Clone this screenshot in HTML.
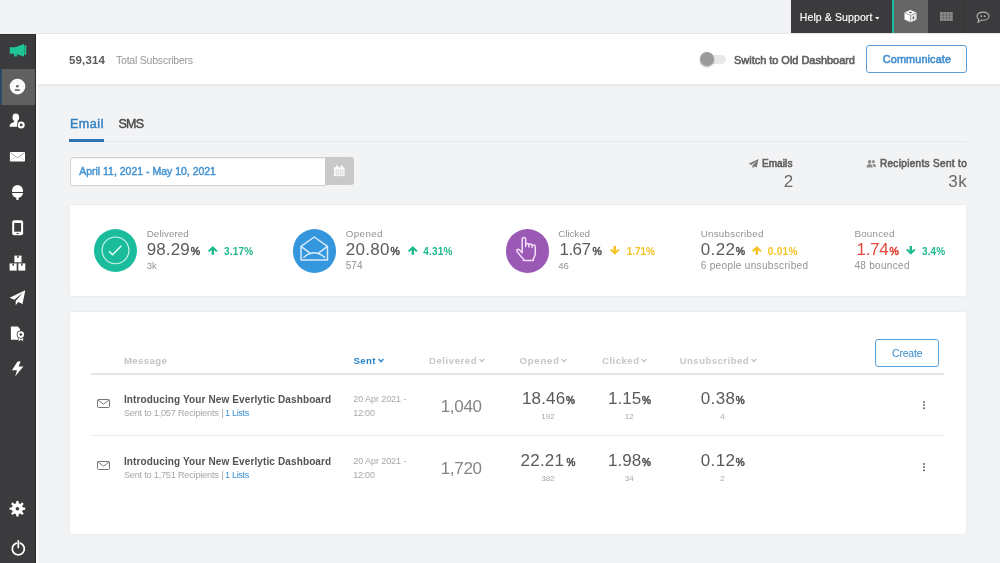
<!DOCTYPE html>
<html lang="en"><head><meta charset="utf-8"><title>Dashboard</title>
<style>
*{box-sizing:border-box;margin:0;padding:0}
html,body{width:1000px;height:563px;overflow:hidden;background:#f2f3f5;font-family:"Liberation Sans", sans-serif;}
.tx{position:absolute;white-space:nowrap;line-height:1;}
#app{position:absolute;left:0;top:0;width:1000px;height:563px;will-change:transform;}
.ic{position:absolute;display:block;overflow:visible}
.bx{position:absolute}
a{text-decoration:none;color:inherit}
.topbar{left:791px;top:0;width:209px;height:33px;background:#3b3b3d}
.side{left:0;top:34px;width:36.200px;height:529px;background:#3b3b3d;border-right:1px solid #2a2a2b;border-top:1px solid #303031}
.side-act{left:0;top:69px;width:35.300px;height:35.500px;background:#606060;border-left:2px solid #2c4a66}
.hdr{left:36px;top:33px;width:964px;height:52.800px;background:#fff;border-top:1px solid #e6e7e9;border-bottom:2px solid #eaebed}
.strip{left:36px;top:84px;width:2.400px;height:479px;background:#fbfbfc}
.card{background:#fff;border-radius:3px;border:1px solid #ebecee}
.btn{border:1px solid #5aa3da;border-radius:3px;background:#fff}
.circ{border-radius:50%}
</style></head>
<body>
<div id="app">
<div class="bx topbar"></div>
<div class="bx" style="left:892px;top:0;width:2px;height:33px;background:#1abc9c"></div>
<div class="bx" style="left:894px;top:0;width:34px;height:33px;background:#666"></div>
<div class="bx" style="left:963px;top:0;width:1px;height:33px;background:#333"></div>
<nav class="topnav">
<span class="tx" id="help" style="left:799.80px;top:12.00px;font-size:10.5px;color:#fff;-webkit-text-stroke:0.15px;letter-spacing:0.106px;">Help &amp; Support</span>
<svg class="ic" style="left:875px;top:16.800px" width="4.600" height="2.600" viewBox="0 0 5 3"><path d="M0 0h5L2.500 3z" fill="#fff"/></svg>
<svg class="ic" style="left:903px;top:9px" width="15" height="14" viewBox="903 9 15 14"><g transform="translate(910.400 16) scale(.94) translate(-910.400 -15.800)"><path d="M910.400 9.500l6.300 2.700v7.400l-6.300 2.900-6.300-2.900v-7.400z" fill="#fff"/><path d="M910.400 15.100l6.300-2.900v7.400l-6.300 2.900z" fill="#e2e2e2"/><path d="M904.300 12.300l6.100 2.800 6.100-2.800M910.400 15.100v7.200" fill="none" stroke="#7a7a7a" stroke-width=".7"/><ellipse cx="910.400" cy="12.200" rx="1.500" ry=".8" fill="#555"/><ellipse cx="913.600" cy="17.600" rx=".8" ry="1.300" fill="#555"/></g></svg>
<svg class="ic" style="left:940px;top:12px" width="13" height="9" viewBox="940 12 13 9"><rect x="940" y="12.100" width="12.700" height="8.800" fill="#8e8e8e"/><path d="M943.200 12v9M946.350 12v9M949.500 12v9M940 15h12.700M940 18h12.700" stroke="#5a5a5a" stroke-width=".6"/></svg>
<svg class="ic" style="left:976px;top:10px" width="14" height="14" viewBox="976 10 14 14"><g transform="translate(0 .5)"><path d="M983 11.600c3.400 0 6 1.800 6 4.100s-2.600 4.100-6 4.100c-.7 0-1.300-.1-1.900-.2l-3.200 2.300.9-3.200c-1.200-.800-1.800-1.800-1.800-3 0-2.300 2.600-4.100 6-4.100z" fill="none" stroke="#b4b4b4" stroke-width="1.100" stroke-linejoin="round"/><g fill="#b4b4b4"><circle cx="981.300" cy="15.700" r=".9"/><circle cx="984.700" cy="15.700" r=".9"/></g></g></svg>
</nav>

<nav>
<div class="bx side"></div>
<div class="bx side-act"></div>
<a class="si"><svg class="ic" style="left:9px;top:43px" width="18" height="14" viewBox="9 43 18 14"><g fill="#1fc597"><path d="M9.8 47.2h5.200L24 44v12.400L15 53.800H9.800z"/><rect x="24.300" y="45.300" width="1.900" height="9.600" rx=".9"/><path d="M13.600 54h3l.7 2.400h-2.800z"/></g></svg></a>
<a class="si"><svg class="ic" style="left:9px;top:78px" width="17" height="17" viewBox="9 78 17 17"><circle cx="17.500" cy="86.600" r="7.800" fill="#fff"/><g stroke="#c9c9c9" stroke-width=".7"><path d="M17.500 80.300v1.500M13 82.200l1 1M22 82.200l-1 1M11.300 86.400h1.400M23.700 86.400h-1.400"/></g><path d="M17.400 86.300l2.600-3.300" stroke="#ddd" stroke-width=".8"/><circle cx="17.400" cy="86.300" r="1.250" fill="#555"/><rect x="14.800" y="89.200" width="5" height="1.600" rx=".3" fill="#555"/></svg></a>
<a class="si"><svg class="ic" style="left:9px;top:113px" width="17" height="16" viewBox="9 113 17 16"><g fill="#fff"><ellipse cx="15.800" cy="117.400" rx="3.300" ry="3.800"/><path d="M9.600 126.800c0-2.700 1.300-3.700 4-4.500l.9-1.200h2.600l.9 1.200c1.600.5 2.800 1 3.400 2l-1.400 2.500z"/></g><circle cx="21.200" cy="124.900" r="4.300" fill="#3b3b3d"/><circle cx="21.200" cy="124.900" r="3.500" fill="#fff"/><circle cx="21.200" cy="124.900" r="1.350" fill="#3b3b3d"/></svg></a>
<a class="si"><svg class="ic" style="left:9px;top:151px" width="17" height="12" viewBox="9 151 17 12"><rect x="9.900" y="151.900" width="15.100" height="9.600" rx=".8" fill="#fff"/><path d="M10.800 152.900l6.700 5 6.700-5" fill="none" stroke="#9a9a9a" stroke-width=".9"/><path d="M10.800 160.600l4.300-3.600M24.200 160.600l-4.300-3.600" fill="none" stroke="#c4c4c4" stroke-width=".7"/></svg></a>
<a class="si"><svg class="ic" style="left:11px;top:184px" width="13" height="17" viewBox="11 184 13 17"><g fill="#fff"><path d="M12.100 191.900v-1.600a5.400 5.400 0 0 1 10.800 0v1.600z"/><path d="M12.100 192.900h10.800v.4a5.400 4.700 0 0 1-10.800 0z"/><rect x="16.400" y="197" width="2.100" height="3"/></g></svg></a>
<a class="si"><svg class="ic" style="left:12px;top:220px" width="12" height="16" viewBox="12 220 12 16"><rect x="12.200" y="220.300" width="10.900" height="15" rx="2" fill="#fff"/><rect x="14.200" y="223" width="6.900" height="8.700" fill="#3b3b3d"/><ellipse cx="17.650" cy="233.500" rx="1.300" ry=".6" fill="#3b3b3d"/></svg></a>
<a class="si"><svg class="ic" style="left:9px;top:255px" width="17" height="16" viewBox="9 255 17 16"><g fill="#fff"><rect x="14.400" y="255.600" width="7.100" height="6.700"/><rect x="9.600" y="263.400" width="7.100" height="7.200"/><rect x="18.300" y="263.400" width="7" height="7.200"/></g><g fill="#3b3b3d"><rect x="17.200" y="255.600" width="1.500" height="2.300"/><rect x="12.400" y="263.400" width="1.500" height="2.300"/><rect x="21.100" y="263.400" width="1.500" height="2.300"/></g></svg></a>
<a class="si"><svg class="ic" style="left:9px;top:290px" width="17" height="16" viewBox="9 290 17 16"><path d="M25.300 290.300L9.600 297.700l4.700 2.100 8.700-7.200-7.300 8.400v4.300l2.500-3.200 4.300 1.800z" fill="#fff"/></svg></a>
<a class="si"><svg class="ic" style="left:10px;top:326px" width="15" height="16" viewBox="10 326 15 16"><path d="M10.900 326.600h6.800l2.400 2.400v10.700h-9.200z" fill="#fff"/><path d="M18.400 337.200h4.800v4.200l-2.400-1.300-2.400 1.300z" fill="#fff" stroke="#3b3b3d" stroke-width=".5"/><circle cx="20.800" cy="334.600" r="4.100" fill="#3b3b3d"/><circle cx="20.800" cy="334.600" r="3.300" fill="#fff"/><circle cx="20.800" cy="334.600" r="1.250" fill="#3b3b3d"/></svg></a>
<a class="si"><svg class="ic" style="left:11px;top:361px" width="13" height="16" viewBox="11 361 13 16"><path d="M17.500 361.600h3.200l-2.200 5h4.900l-8.200 9.600 1.800-6h-5.100z" fill="#fff"/></svg></a>
<a class="si"><svg class="ic" style="left:9px;top:500px" width="17" height="17" viewBox="9 500 17 17"><path d="M16.20 503.23 L16.23 500.89 L18.57 500.89 L18.60 503.23 L20.42 503.98 L22.09 502.35 L23.75 504.01 L22.12 505.68 L22.87 507.50 L25.21 507.53 L25.21 509.87 L22.87 509.90 L22.12 511.72 L23.75 513.39 L22.09 515.05 L20.42 513.42 L18.60 514.17 L18.57 516.51 L16.23 516.51 L16.20 514.17 L14.38 513.42 L12.71 515.05 L11.05 513.39 L12.68 511.72 L11.93 509.90 L9.59 509.87 L9.59 507.53 L11.93 507.50 L12.68 505.68 L11.05 504.01 L12.71 502.35 L14.38 503.98Z" fill="#fff"/><circle cx="17.400" cy="508.700" r="1.800" fill="#3b3b3d"/></svg></a>
<a class="si"><svg class="ic" style="left:11px;top:539px" width="15" height="17" viewBox="11 539 15 17"><path d="M16.300 543.200a6 6 0 1 0 4 0" fill="none" stroke="#fff" stroke-width="1.800" stroke-linecap="round"/><path d="M18.300 540.800v6.600" stroke="#fff" stroke-width="1.700" stroke-linecap="round"/></svg></a>
</nav>

<header>
<div class="bx hdr"></div><div class="bx strip"></div>
<span class="tx" id="subs_n" style="left:69.10px;top:55.00px;font-size:11.5px;color:#5a5a5a;font-weight:700;letter-spacing:0.103px;">59,314</span><span class="tx" id="subs_l" style="left:116.00px;top:55.00px;font-size:10.5px;color:#979797;letter-spacing:-0.215px;">Total Subscribers</span>
<div class="bx" style="left:701px;top:54.800px;width:25px;height:9px;border-radius:5px;background:#e9e9e9"></div>
<div class="bx circ" style="left:699.900px;top:52.400px;width:14px;height:14px;background:#9b9b9b;box-shadow:0 1px 2px rgba(0,0,0,.3)"></div>
<span class="tx" id="sw_l" style="left:734.00px;top:55.00px;font-size:11px;color:#5f5f5f;-webkit-text-stroke:0.6px;letter-spacing:-0.031px;">Switch to Old Dashboard</span>
<div class="bx btn" style="left:866px;top:45px;width:101.200px;height:28.400px;border-color:#5a9dd6;border-width:1.200px"></div>
<span class="tx" id="comm" style="left:882.80px;top:54.00px;font-size:10.8px;color:#4590d0;-webkit-text-stroke:0.6px;letter-spacing:0.159px;">Communicate</span>
</header>

<main>
<span class="tx" id="tab_e" style="left:69.90px;top:118.01px;font-size:12.5px;color:#3581c2;-webkit-text-stroke:0.45px;letter-spacing:0.584px;">Email</span><span class="tx" id="tab_s" style="left:118.40px;top:118.01px;font-size:12.5px;color:#4a4a4a;-webkit-text-stroke:0.45px;letter-spacing:-0.747px;">SMS</span>
<div class="bx" style="left:69px;top:140.5px;width:898px;height:1px;background:#e6e7e9"></div>
<div class="bx" style="left:69.300px;top:139px;width:34.700px;height:2.600px;background:#2874b4"></div>

<div class="bx" style="left:69.600px;top:156.500px;width:256.400px;height:29px;background:#fff;border:1px solid #d2d2d2;border-radius:3px 0 0 3px;box-shadow:inset 0 1px 1px rgba(0,0,0,.06)"></div>
<div class="bx" style="left:324.800px;top:157px;width:29px;height:28px;background:#c9c9c9;border-radius:0 3px 3px 0"></div>
<svg class="ic" style="left:333px;top:164px" width="13" height="13" viewBox="333 164 13 13"><path d="M334 167.300h10.500v8.800H334z" fill="#fff"/><rect x="336" y="165.300" width="1.700" height="3" rx=".5" fill="#fff"/><rect x="340.800" y="165.300" width="1.700" height="3" rx=".5" fill="#fff"/><path d="M334.500 170.200h9.500M334.500 172.200h9.500M334.500 174.200h9.500M336.400 169v7M338.400 169v7M340.400 169v7M342.400 169v7" stroke="#d4d4d4" stroke-width=".6"/></svg>
<span class="tx" id="date" style="left:79.20px;top:166.00px;font-size:10.5px;color:#4393d3;-webkit-text-stroke:0.45px;letter-spacing:-0.007px;">April 11, 2021 - May 10, 2021</span>

<svg class="ic" style="left:748px;top:158px" width="11" height="10" viewBox="748 158 11 10"><path d="M758.500 159.100l-10 4.600 3 1.300 5.500-4.500-4.600 5.300v2.600l1.600-2 2.700 1.100z" fill="#7a7a7a"/></svg>
<span class="tx" id="em_l" style="left:761.90px;top:159.02px;font-size:10px;color:#5f5f5f;-webkit-text-stroke:0.6px;letter-spacing:0.097px;">Emails</span><span class="tx" id="em_v" style="left:783.70px;top:173.00px;font-size:17px;color:#6a6a6a;">2</span>
<svg class="ic" style="left:866px;top:159px" width="11" height="9" viewBox="866 159 11 9"><g fill="#8c8c8c"><circle cx="869.600" cy="161.900" r="1.800"/><path d="M866.500 167.600c0-2.400 1.300-3.500 3.100-3.500s3.100 1.100 3.100 3.500z"/><circle cx="873.400" cy="161.600" r="1.500"/><path d="M873.200 163.700c1.700 0 2.800 1.100 2.800 3.300h-2.600c0-1.300-.4-2.400-1.100-3.100.3-.1.600-.2.900-.2z"/></g></svg>
<span class="tx" id="rc_l" style="left:879.90px;top:159.02px;font-size:10px;color:#5f5f5f;-webkit-text-stroke:0.6px;letter-spacing:0.337px;">Recipients Sent to</span><span class="tx" id="rc_v" style="left:948.30px;top:173.00px;font-size:17px;color:#6a6a6a;letter-spacing:0.531px;">3k</span>

<section>
<div class="bx card" style="left:69px;top:203.500px;width:898.200px;height:93.400px"></div>
<div class="bx circ" style="left:93.750px;top:228.750px;width:43.500px;height:43.500px;background:#1abc9c"></div>
<svg class="ic" style="left:101px;top:236px" width="29" height="29" viewBox="101 236 29 29"><circle cx="115.500" cy="250.400" r="13.400" fill="none" stroke="#d4f5ea" stroke-width="1.100"/><path d="M109 251.200l3.500 3.500 8.900-8.900" fill="none" stroke="#e8fbf5" stroke-width="1.500"/></svg>
<span class="tx" id="s1_l" style="left:146.70px;top:229.02px;font-size:9.8px;color:#929292;letter-spacing:0.089px;">Delivered</span><span class="tx" id="s1_v" style="left:146.70px;top:241.00px;font-size:17px;color:#5c5c5c;letter-spacing:0.113px;">98.29</span><span class="tx" id="s1_p" style="left:190.80px;top:246.00px;font-size:10.5px;color:#5c5c5c;-webkit-text-stroke:0.6px;">%</span><svg class="ic" style="left:208px;top:246.2px" width="9.600" height="8.800" viewBox="0 0 9.600 8.800"><g><path d="M4.800 0L9.600 4.700 8.200 6.100 6.050 4V8.800H3.550V4L1.400 6.100 0 4.700z" fill="#1eb98c"/></g></svg><span class="tx" id="s1_d" style="left:224.00px;top:247.02px;font-size:10px;color:#1eb98c;font-weight:700;letter-spacing:0.210px;">3.17%</span><span class="tx" id="s1_s" style="left:146.70px;top:261.01px;font-size:9.5px;color:#929292;letter-spacing:0.153px;">3k</span>

<div class="bx circ" style="left:292.500px;top:228.750px;width:43.750px;height:43.750px;background:#3496dc"></div>
<svg class="ic" style="left:300px;top:236px" width="29" height="25" viewBox="300 236 29 25"><g fill="none" stroke="#d9ecfa" stroke-width="1.450" stroke-linejoin="round"><path d="M301 246.300L314.200 237l13.300 9.300V260H301z"/><path d="M301 246.300l8.700 6.500M327.500 246.300l-8.700 6.500M303.300 257.800q10.900-10.200 21.800 0"/></g></svg>
<span class="tx" id="s2_l" style="left:345.75px;top:229.02px;font-size:9.8px;color:#929292;letter-spacing:0.375px;">Opened</span><span class="tx" id="s2_v" style="left:345.75px;top:241.00px;font-size:17px;color:#5c5c5c;letter-spacing:0.301px;">20.80</span><span class="tx" id="s2_p" style="left:390.40px;top:246.00px;font-size:10.5px;color:#5c5c5c;-webkit-text-stroke:0.6px;">%</span><svg class="ic" style="left:407.5px;top:246.2px" width="9.600" height="8.800" viewBox="0 0 9.600 8.800"><g><path d="M4.800 0L9.600 4.700 8.200 6.100 6.050 4V8.800H3.550V4L1.400 6.100 0 4.700z" fill="#1eb98c"/></g></svg><span class="tx" id="s2_d" style="left:423.25px;top:247.02px;font-size:10px;color:#1eb98c;font-weight:700;letter-spacing:0.223px;">4.31%</span><span class="tx" id="s2_s" style="left:345.75px;top:261.00px;font-size:10px;color:#929292;letter-spacing:0.031px;">574</span>

<div class="bx circ" style="left:505.500px;top:228.750px;width:43.750px;height:43.750px;background:#9b59b6"></div>
<svg class="ic" style="left:515px;top:236px" width="22" height="26" viewBox="515 236 22 26"><path d="M522.200 252.600V239.300a1.750 1.750 0 0 1 3.500 0V246.500 245a1.600 1.600 0 0 1 3.200 0v2-1.300a1.600 1.600 0 0 1 3.200 0v1.900-.9a1.600 1.600 0 0 1 3.200 0V253.500c0 2.300-1.300 3.600-1.900 5.200v1.700H523.400v-1.400c-2.100-2.100-4.300-4.600-6.300-7.600-1-1.600.8-2.900 2.200-1.700z" fill="none" stroke="#f3dff8" stroke-width="1.500" stroke-linejoin="round"/></svg>
<span class="tx" id="s3_l" style="left:558.25px;top:229.02px;font-size:9.8px;color:#929292;letter-spacing:-0.062px;">Clicked</span><span class="tx" id="s3_v" style="left:559.50px;top:241.00px;font-size:17px;color:#5c5c5c;letter-spacing:-0.531px;">1.67</span><span class="tx" id="s3_p" style="left:592.40px;top:246.00px;font-size:10.5px;color:#5c5c5c;-webkit-text-stroke:0.6px;">%</span><svg class="ic" style="left:609.8px;top:246.2px" width="9.600" height="8.800" viewBox="0 0 9.600 8.800"><g transform="rotate(180 4.800 4.400)"><path d="M4.800 0L9.600 4.700 8.200 6.100 6.050 4V8.800H3.550V4L1.400 6.100 0 4.700z" fill="#f6c123"/></g></svg><span class="tx" id="s3_d" style="left:626.75px;top:247.02px;font-size:10px;color:#f6c123;font-weight:700;letter-spacing:-0.027px;">1.71%</span><span class="tx" id="s3_s" style="left:558.25px;top:261.01px;font-size:9.5px;color:#929292;letter-spacing:-0.078px;">46</span>

<span class="tx" id="s4_l" style="left:700.70px;top:229.02px;font-size:9.8px;color:#929292;letter-spacing:0.254px;">Unsubscribed</span><span class="tx" id="s4_v" style="left:700.70px;top:241.00px;font-size:17px;color:#5c5c5c;letter-spacing:0.402px;">0.22</span><span class="tx" id="s4_p" style="left:735.70px;top:246.00px;font-size:10.5px;color:#5c5c5c;-webkit-text-stroke:0.6px;">%</span><svg class="ic" style="left:752.2px;top:246.2px" width="9.600" height="8.800" viewBox="0 0 9.600 8.800"><g><path d="M4.800 0L9.600 4.700 8.200 6.100 6.050 4V8.800H3.550V4L1.400 6.100 0 4.700z" fill="#f6c123"/></g></svg><span class="tx" id="s4_d" style="left:767.70px;top:247.02px;font-size:10px;color:#f6c123;font-weight:700;letter-spacing:0.310px;">0.01%</span><span class="tx" id="s4_s" style="left:700.70px;top:261.00px;font-size:10px;color:#929292;letter-spacing:0.333px;">6 people unsubscribed</span>
<span class="tx" id="s5_l" style="left:854.40px;top:229.02px;font-size:9.8px;color:#929292;letter-spacing:0.235px;">Bounced</span><span class="tx" id="s5_v" style="left:856.50px;top:241.00px;font-size:17px;color:#e5493a;letter-spacing:-0.298px;">1.74</span><span class="tx" id="s5_p" style="left:889.40px;top:246.00px;font-size:10.5px;color:#e5493a;-webkit-text-stroke:0.6px;">%</span><svg class="ic" style="left:905.8px;top:246.2px" width="9.600" height="8.800" viewBox="0 0 9.600 8.800"><g transform="rotate(180 4.800 4.400)"><path d="M4.800 0L9.600 4.700 8.200 6.100 6.050 4V8.800H3.550V4L1.400 6.100 0 4.700z" fill="#1eb98c"/></g></svg><span class="tx" id="s5_d" style="left:922.00px;top:247.02px;font-size:10px;color:#1eb98c;font-weight:700;letter-spacing:0.134px;">3.4%</span><span class="tx" id="s5_s" style="left:854.40px;top:261.00px;font-size:10px;color:#929292;letter-spacing:0.313px;">48 bounced</span>
</section>

<section>
<div class="bx card" style="left:69px;top:311px;width:898.200px;height:223.500px"></div>
<div class="bx btn" style="left:875.300px;top:339.200px;width:63.700px;height:28.300px"></div>
<span class="tx" id="create" style="left:892.00px;top:348.00px;font-size:10.5px;color:#3a8ed0;letter-spacing:-0.183px;">Create</span>
<span class="tx" id="h_msg" style="left:123.90px;top:356.01px;font-size:9.6px;color:#c3c3c3;font-weight:700;letter-spacing:0.395px;">Message</span><span class="tx" id="h_sent" style="left:353.40px;top:356.01px;font-size:9.6px;color:#2a84cc;font-weight:700;letter-spacing:0.434px;">Sent</span><svg class="ic" style="left:378.3px;top:357.900px" width="6" height="5" viewBox="0 0 6 5"><path d="M0.6 1 L3 3.6 L5.4 1" fill="none" stroke="#2a84cc" stroke-width="1.400"/></svg><span class="tx" id="h_del" style="left:429.00px;top:356.01px;font-size:9.6px;color:#c6c6c6;font-weight:700;letter-spacing:0.550px;">Delivered</span><svg class="ic" style="left:479.4px;top:357.900px" width="6" height="5" viewBox="0 0 6 5"><path d="M0.6 1 L3 3.6 L5.4 1" fill="none" stroke="#c4c4c4" stroke-width="1.400"/></svg><span class="tx" id="h_op" style="left:519.60px;top:356.01px;font-size:9.6px;color:#c6c6c6;font-weight:700;letter-spacing:0.716px;">Opened</span><svg class="ic" style="left:561px;top:357.900px" width="6" height="5" viewBox="0 0 6 5"><path d="M0.6 1 L3 3.6 L5.4 1" fill="none" stroke="#c4c4c4" stroke-width="1.400"/></svg><span class="tx" id="h_cl" style="left:602.00px;top:356.01px;font-size:9.6px;color:#c6c6c6;font-weight:700;letter-spacing:0.477px;">Clicked</span><svg class="ic" style="left:641px;top:357.900px" width="6" height="5" viewBox="0 0 6 5"><path d="M0.6 1 L3 3.6 L5.4 1" fill="none" stroke="#c4c4c4" stroke-width="1.400"/></svg><span class="tx" id="h_un" style="left:679.70px;top:356.01px;font-size:9.6px;color:#c6c6c6;font-weight:700;letter-spacing:0.447px;">Unsubscribed</span><svg class="ic" style="left:751.3px;top:357.900px" width="6" height="5" viewBox="0 0 6 5"><path d="M0.6 1 L3 3.6 L5.4 1" fill="none" stroke="#c4c4c4" stroke-width="1.400"/></svg>
<div class="bx" style="left:91px;top:372.500px;width:853px;height:2px;background:#e4e5e7"></div>
<div class="bx" style="left:91px;top:435.200px;width:853px;height:1px;background:#e9eaec"></div>
<svg class="ic" style="left:97.3px;top:399.3px" width="13" height="9" viewBox="0 0 13 9" ><rect x=".5" y=".5" width="12" height="8" rx="1" fill="none" stroke="#777" stroke-width="1"/><path d="M.8 1l5.700 4.200L12.200 1" fill="none" stroke="#777" stroke-width="1"/></svg><span class="tx" id="r1_t" style="left:123.90px;top:395.00px;font-size:10px;color:#525252;font-weight:700;letter-spacing:0.124px;">Introducing Your New Everlytic Dashboard</span><span class="tx" id="r1_s1" style="left:123.90px;top:409.01px;font-size:9.2px;color:#a6a6a6;letter-spacing:-0.226px;">Sent to 1,057 Recipients</span><span class="tx" id="r1_s2" style="left:221.40px;top:409.01px;font-size:9.2px;color:#999;">|</span><span class="tx" id="r1_s3" style="left:225.00px;top:409.01px;font-size:9.2px;color:#3f92d2;letter-spacing:-0.377px;">1 Lists</span><span class="tx" id="r1_d1" style="left:353.30px;top:395.01px;font-size:9px;color:#a8a8a8;letter-spacing:-0.079px;">20 Apr 2021 -</span><span class="tx" id="r1_d2" style="left:353.30px;top:409.01px;font-size:9px;color:#a8a8a8;letter-spacing:-0.233px;">12:00</span><span class="tx" id="r1_dv" style="left:440.70px;top:398.00px;font-size:17px;color:#858585;letter-spacing:-0.312px;">1,040</span><span class="tx" id="r1_o" style="left:522.00px;top:390.00px;font-size:17px;color:#5a5a5a;letter-spacing:0.163px;">18.46</span><span class="tx" id="r1_op" style="left:566.00px;top:396.00px;font-size:10px;color:#5a5a5a;-webkit-text-stroke:0.6px;">%</span><span class="tx" id="r1_on" style="left:548.00px;top:413.01px;font-size:8px;color:#a8a8a8;transform:translateX(-50%);letter-spacing:-0.030px;">192</span><span class="tx" id="r1_c" style="left:608.00px;top:390.00px;font-size:17px;color:#5a5a5a;letter-spacing:0.069px;">1.15</span><span class="tx" id="r1_cp" style="left:642.00px;top:396.00px;font-size:10px;color:#5a5a5a;-webkit-text-stroke:0.6px;">%</span><span class="tx" id="r1_cn" style="left:629.30px;top:413.01px;font-size:8px;color:#a8a8a8;transform:translateX(-50%);letter-spacing:0.094px;">12</span><span class="tx" id="r1_u" style="left:700.80px;top:390.00px;font-size:17px;color:#5a5a5a;letter-spacing:0.369px;">0.38</span><span class="tx" id="r1_up" style="left:735.80px;top:396.00px;font-size:10px;color:#5a5a5a;-webkit-text-stroke:0.6px;">%</span><span class="tx" id="r1_un" style="left:722.60px;top:413.01px;font-size:8px;color:#a8a8a8;transform:translateX(-50%);">4</span><div class="bx" style="left:922.700px;top:400.5px;width:2.600px;height:2.200px;background:#666;border-radius:1px;box-shadow:0 3.1px 0 #666,0 6.2px 0 #666"></div>
<svg class="ic" style="left:97.3px;top:461.3px" width="13" height="9" viewBox="0 0 13 9" ><rect x=".5" y=".5" width="12" height="8" rx="1" fill="none" stroke="#777" stroke-width="1"/><path d="M.8 1l5.700 4.200L12.200 1" fill="none" stroke="#777" stroke-width="1"/></svg><span class="tx" id="r2_t" style="left:123.90px;top:457.00px;font-size:10px;color:#525252;font-weight:700;letter-spacing:0.124px;">Introducing Your New Everlytic Dashboard</span><span class="tx" id="r2_s1" style="left:123.90px;top:471.01px;font-size:9.2px;color:#a6a6a6;letter-spacing:-0.226px;">Sent to 1,751 Recipients</span><span class="tx" id="r2_s2" style="left:221.40px;top:471.01px;font-size:9.2px;color:#999;">|</span><span class="tx" id="r2_s3" style="left:225.00px;top:471.01px;font-size:9.2px;color:#3f92d2;letter-spacing:-0.377px;">1 Lists</span><span class="tx" id="r2_d1" style="left:353.30px;top:457.01px;font-size:9px;color:#a8a8a8;letter-spacing:-0.079px;">20 Apr 2021 -</span><span class="tx" id="r2_d2" style="left:353.30px;top:471.01px;font-size:9px;color:#a8a8a8;letter-spacing:-0.233px;">12:00</span><span class="tx" id="r2_dv" style="left:440.70px;top:460.00px;font-size:17px;color:#858585;letter-spacing:-0.312px;">1,720</span><span class="tx" id="r2_o" style="left:520.50px;top:452.00px;font-size:17px;color:#5a5a5a;letter-spacing:0.238px;">22.21</span><span class="tx" id="r2_op" style="left:566.40px;top:458.00px;font-size:10px;color:#5a5a5a;-webkit-text-stroke:0.6px;">%</span><span class="tx" id="r2_on" style="left:548.00px;top:475.01px;font-size:8px;color:#a8a8a8;transform:translateX(-50%);letter-spacing:-0.030px;">382</span><span class="tx" id="r2_c" style="left:608.00px;top:452.00px;font-size:17px;color:#5a5a5a;letter-spacing:0.069px;">1.98</span><span class="tx" id="r2_cp" style="left:642.00px;top:458.00px;font-size:10px;color:#5a5a5a;-webkit-text-stroke:0.6px;">%</span><span class="tx" id="r2_cn" style="left:629.30px;top:475.01px;font-size:8px;color:#a8a8a8;transform:translateX(-50%);letter-spacing:0.094px;">34</span><span class="tx" id="r2_u" style="left:700.80px;top:452.00px;font-size:17px;color:#5a5a5a;letter-spacing:0.369px;">0.12</span><span class="tx" id="r2_up" style="left:735.80px;top:458.00px;font-size:10px;color:#5a5a5a;-webkit-text-stroke:0.6px;">%</span><span class="tx" id="r2_un" style="left:722.60px;top:475.01px;font-size:8px;color:#a8a8a8;transform:translateX(-50%);">2</span><div class="bx" style="left:922.700px;top:462.5px;width:2.600px;height:2.200px;background:#666;border-radius:1px;box-shadow:0 3.1px 0 #666,0 6.2px 0 #666"></div>
</section>
</main>
</div>
</body></html>
